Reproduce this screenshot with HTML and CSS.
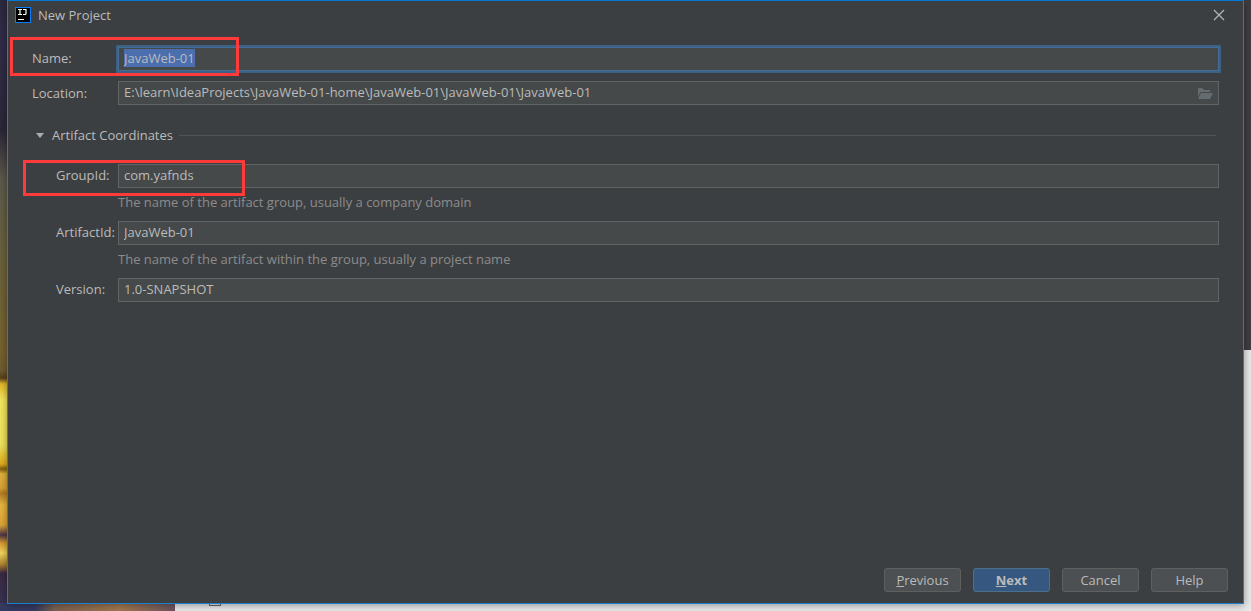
FILE: index.html
```html
<!DOCTYPE html>
<html lang="en">
<head>
<meta charset="utf-8">
<title>New Project</title>
<link rel="stylesheet" href="styles.css">
</head>
<body>
<div class="desktop-left"></div>
<div class="desktop-bottom"></div>
<div class="desktop-checkbox"></div>
<main class="dialog">
  <header class="titlebar">
    <svg class="app-icon" viewBox="0 0 16 16" aria-hidden="true">
      <rect width="16" height="16" fill="#087cfa"/>
      <rect x="1" y="1" width="14" height="14" fill="#000"/>
      <path d="M3 2.500h4M5 2.500v5M3 7.500h4M8 2.500h3v4q0 1-1 1h-2" fill="none" stroke="#fff" stroke-width="1.200"/>
      <path d="M3 12.500h6" stroke="#fff"/>
    </svg>
    <h1 class="title">New Project</h1>
    <button class="close" type="button" aria-label="Close">
      <svg viewBox="0 0 12 12" width="12" height="12"><path d="M1 1l10 10M11 1L1 11" stroke="#b4b6b7" stroke-width="1.200"/></svg>
    </button>
  </header>
  <form class="form">
    <div class="row row-name">
      <label class="label" for="name">Name:</label>
      <input class="field" id="name" type="text" value="JavaWeb-01" autofocus>
      <span class="mark mark-name"></span>
    </div>
    <div class="row row-location">
      <label class="label" for="location">Location:</label>
      <div class="field-wrap">
        <input class="field" id="location" type="text" value="E:\learn\IdeaProjects\JavaWeb-01-home\JavaWeb-01\JavaWeb-01\JavaWeb-01">
        <button class="browse" type="button" aria-label="Browse">
          <svg viewBox="0 0 16 12" width="16" height="12"><path d="M1 1h4l2 2h6v2H3.500L1 10z M4 6h12l-3 6H1z" fill="#646c70"/></svg>
        </button>
      </div>
    </div>
    <button class="section" type="button" aria-expanded="true">
      <svg class="arrow" viewBox="0 0 8 5" width="8" height="5"><path d="M0 0h8L4 5z" fill="#adadad"/></svg>
      <span>Artifact Coordinates</span>
      <span class="rule"></span>
    </button>
    <div class="row nested row-group">
      <label class="label" for="group">GroupId:</label>
      <input class="field" id="group" type="text" value="com.yafnds">
      <span class="mark mark-group"></span>
    </div>
    <p class="hint">The name of the artifact group, usually a company domain</p>
    <div class="row nested">
      <label class="label" for="artifact">ArtifactId:</label>
      <input class="field" id="artifact" type="text" value="JavaWeb-01">
    </div>
    <p class="hint">The name of the artifact within the group, usually a project name</p>
    <div class="row nested">
      <label class="label" for="version">Version:</label>
      <input class="field" id="version" type="text" value="1.0-SNAPSHOT">
    </div>
  </form>
  <footer class="actions">
    <button class="btn" type="button"><u>P</u>revious</button>
    <button class="btn primary" type="button"><u>N</u>ext</button>
    <button class="btn" type="button">Cancel</button>
    <button class="btn" type="button">Help</button>
  </footer>
</main>
<script src="script.js"></script>
</body>
</html>
```
FILE: styles.css
```css
* { box-sizing: border-box; }

body {
  margin: 0;
  min-height: 100vh;
  padding: 0 7px 7px;
  display: flex;
  overflow: hidden;
  font: 13px/17px "Open Sans", "Noto Sans", sans-serif;
  color: #bbbbbb;
  background: linear-gradient(#413d40 350px, #e9e9e9 350px);
}

.desktop-left {
  position: absolute;
  left: 0;
  top: 0;
  bottom: 0;
  width: 8px;
  background: linear-gradient(#2b2940 0, #302c48 40px, #2c2738 130px, #5c5a4c 180px,
    #69613d 250px, #77622f 350px, #705b30 370px, #563f1c 378px, #e4b92b 384px,
    #f4e85d 400px, #f0e45d 445px, #dfac1c 464px, #84600e 469px, #dfb33d 474px,
    #d9a238 488px, #b27d20 493px, #e8b740 505px, #e0a638 525px, #4d3545 535px,
    #d69a2e 543px, #f4d75e 553px, #aa802e 565px, #3b2a44 573px, #363456 611px);
}

.desktop-bottom {
  position: absolute;
  left: 0;
  bottom: 0;
  width: 175px;
  height: 8px;
  background: linear-gradient(90deg, #363b61 35px, #7e6250 55px, #a47950 120px, #6c5560);
}

.desktop-checkbox {
  position: absolute;
  left: 209px;
  bottom: 5px;
  width: 12px;
  height: 12px;
  border: 1px solid #666666;
}

.dialog {
  position: relative;
  flex: 1;
  display: flex;
  flex-direction: column;
  border: 1px solid #1b80d0;
  border-top-color: #0078d7;
  background: #3c3f41;
  box-shadow: 0 1px 8px rgba(0, 0, 0, 0.4);
}

.titlebar {
  display: flex;
  align-items: center;
  height: 28px;
  padding: 0 18px 0 7px;
}

.app-icon { width: 16px; height: 16px; }

.title {
  flex: 1;
  margin: 0 0 0 7px;
  font-size: 13px;
  font-weight: 400;
}

.close, .browse, .section {
  display: flex;
  padding: 0;
  border: 0;
  background: none;
  color: inherit;
  font: inherit;
}

.form {
  flex: 1;
  padding: 18px 24px 0;
}

.row {
  position: relative;
  display: flex;
  align-items: center;
}

.row-location { margin-top: 10px; }

.label {
  width: 86px;
  padding-bottom: 1px;
  white-space: nowrap;
}

.row-location .label { padding-bottom: 0; }

.nested .label { padding-left: 24px; }

.field {
  flex: 1;
  min-width: 0;
  width: 100%;
  height: 24px;
  padding: 0 5px 2px;
  border: 1px solid #646464;
  background: #45494a;
  color: #bbbbbb;
  font: inherit;
  outline: none;
}

.field:focus {
  border-color: #466d94;
  box-shadow: 0 0 0 2px #3d6185;
  caret-color: transparent;
}

.field::selection { background: #4b6eaf; color: #bbbbbb; }

.field-wrap {
  position: relative;
  flex: 1;
  display: flex;
}

.browse {
  position: absolute;
  right: 6px;
  top: 6px;
}

.section {
  align-items: center;
  width: 100%;
  height: 18px;
  margin-top: 21px;
  padding: 0 3px 0 4px;
}

.arrow { margin-right: 8px; }

.rule {
  flex: 1;
  height: 1px;
  margin-left: 6px;
  background: #515355;
}

.row-group { margin-top: 20px; }

.hint {
  margin: 0 0 0 86px;
  padding: 6px 0 10px;
  color: #8c8c8c;
}

.mark {
  position: absolute;
  border: 3px solid #ff3a3a;
  pointer-events: none;
}

.mark-name { left: -22px; top: -10px; width: 229px; height: 39px; }

.mark-group { left: -9px; top: -4px; width: 222px; height: 36px; }

.actions {
  display: flex;
  justify-content: flex-end;
  gap: 12px;
  padding: 0 15px 11px;
}

.btn {
  width: 77px;
  height: 24px;
  padding: 0;
  border: 1px solid #5e6060;
  border-radius: 3px;
  background: #4c5052;
  color: #bbbbbb;
  font: inherit;
}

.btn.primary {
  border-color: #4c708c;
  background: #365880;
  font-weight: 700;
}
```
FILE: script.js
```js
const nameField = document.getElementById("name");
nameField.focus();
nameField.select();
```
